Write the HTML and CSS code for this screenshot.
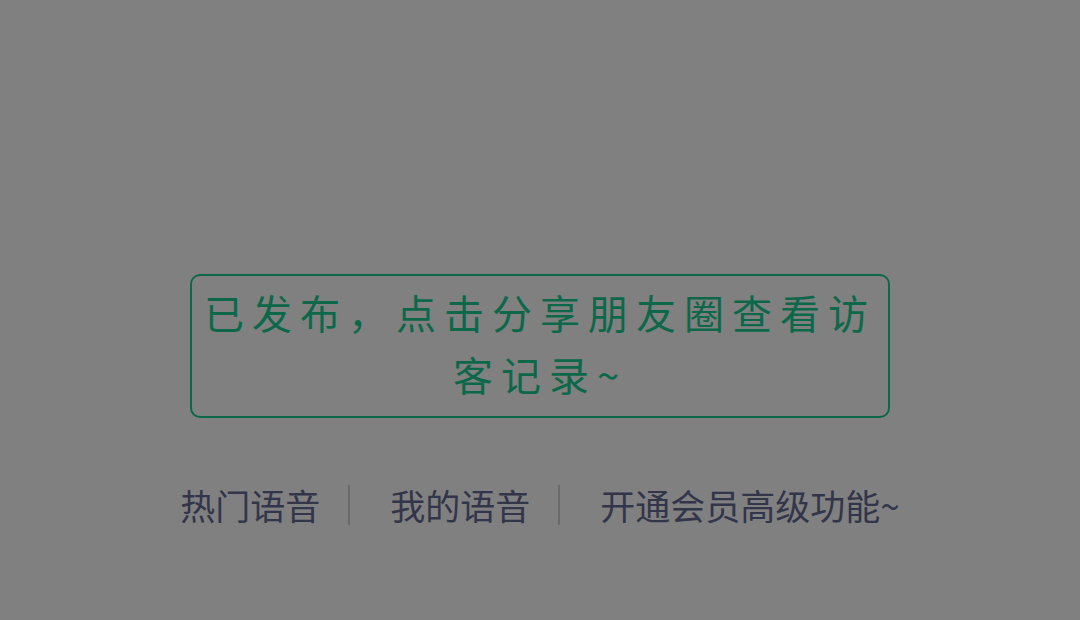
FILE: index.html
```html
<!DOCTYPE html>
<html lang="zh-CN">
<head>
<meta charset="utf-8">
<link rel="stylesheet" href="styles.css">
</head>
<body>
<div class="screen">
  <div class="notice">
    <p class="notice-text">已发布，点击分享朋友圈查看访客记录~</p>
  </div>
  <nav class="links">
    <span class="link">热门语音</span>
    <span class="sep"></span>
    <span class="link">我的语音</span>
    <span class="sep"></span>
    <span class="link">开通会员高级功能~</span>
  </nav>
</div>
</body>
</html>
```
FILE: styles.css
```css
html, body {
  margin: 0;
  padding: 0;
  background: #808080;
}
.screen {
  width: 1080px;
  height: 620px;
  display: flex;
  flex-direction: column;
  align-items: center;
  padding-top: 274px;
  box-sizing: border-box;
  font-family: "Noto Sans CJK SC", "Noto Sans", sans-serif;
}
.notice {
  width: 700px;
  height: 144px;
  box-sizing: border-box;
  border: 2px solid #0d684a;
  border-radius: 10px;
  padding: 5px 6px 0 6px;
}
.notice-text {
  margin: 0;
  color: #0d684a;
  font-size: 40px;
  line-height: 62px;
  letter-spacing: 8px;
  text-align: center;
}
.links {
  margin-top: 67px;
  display: flex;
  align-items: center;
  color: #33354a;
  font-size: 35px;
  line-height: 40px;
}
.link {
  display: block;
}
.sep {
  display: block;
  width: 2px;
  height: 40px;
  background: #6a6a6a;
  margin: 0 40px 0 28px;
}
```
